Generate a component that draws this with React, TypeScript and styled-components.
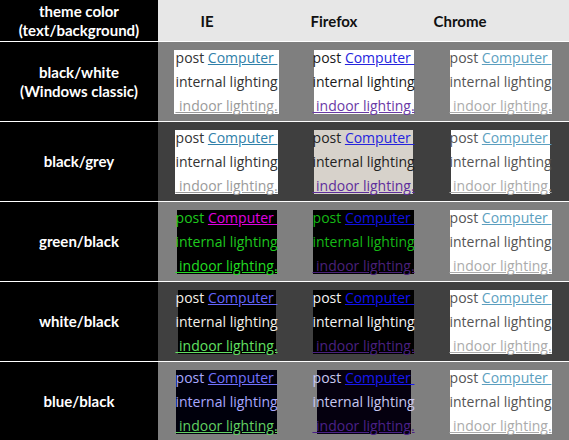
import React from "react";
import styled, { createGlobalStyle } from "styled-components";

const GlobalStyle = createGlobalStyle`
  html, body { margin: 0; padding: 0; background: #000; }
  body { width: 569px; height: 440px; overflow: hidden; }
`;

const Table = styled.div`
  width: 569px;
  display: flex;
  flex-direction: column;
  font-family: Lato, "Open Sans", sans-serif;
`;

const HeaderRow = styled.div`
  display: grid;
  grid-template-columns: 158px 1fr;
  height: 41px;
`;

const LabelCell = styled.div`
  background: #000;
  color: #fff;
  font-weight: 700;
  font-size: 15px;
  line-height: 19px;
  display: flex;
  flex-direction: column;
  align-items: center;
  justify-content: center;
  text-align: center;
`;

const BrowserHeads = styled.div`
  background: #e7e7e7;
  display: grid;
  grid-template-columns: 98px 156px 96px 1fr;
  align-items: center;
`;

const BrowserHead = styled.div`
  text-align: center;
  font-weight: 700;
  font-size: 15px;
  color: #111;
`;

const Row = styled.div`
  display: grid;
  grid-template-columns: 158px 1fr;
  height: 79px;
  border-top: 1px solid #fff;
`;

const Cells = styled.div<{ $bg: string }>`
  background: ${(p) => p.$bg};
  display: grid;
  grid-template-columns: repeat(3, 137px);
  align-items: center;
  justify-items: center;
`;

const Box = styled.div<{ $bg: string; $fg: string; $w: number }>`
  width: ${(p) => p.$w}px;
  height: 64px;
  background: ${(p) => p.$bg};
  color: ${(p) => p.$fg};
  font-family: "Open Sans", sans-serif;
  font-size: 14px;
  line-height: 24px;
  display: flex;
  flex-direction: column;
  justify-content: center;
  align-items: center;
  white-space: nowrap;
`;

const Line = styled.div`
  height: 24px;
`;

const Link = styled.span<{ $c: string }>`
  color: ${(p) => p.$c};
  text-decoration: underline;
  text-decoration-color: ${(p) => p.$c};
`;

type CellStyle = { bg: string; text: string; link: string; visited: string; w: number };

const chrome: CellStyle = { bg: "#fff", text: "#555", link: "#5c9fbf", visited: "#ababab", w: 102 };
const ieWhite: CellStyle = { bg: "#fff", text: "#333", link: "#2f80a9", visited: "#9a9a9a", w: 105 };

const rows: { label: string[]; bg: string; cells: CellStyle[] }[] = [
  {
    label: ["black/white", "(Windows classic)"],
    bg: "#7f7f7f",
    cells: [
      ieWhite,
      { bg: "#fff", text: "#1a1a1a", link: "#2525dd", visited: "#6a3aa6", w: 100 },
      chrome,
    ],
  },
  {
    label: ["black/grey"],
    bg: "#3f3f3f",
    cells: [
      { ...ieWhite, w: 103 },
      { bg: "#d7d2cb", text: "#222", link: "#2424dd", visited: "#5e2e9c", w: 99 },
      { ...chrome, w: 99 },
    ],
  },
  {
    label: ["green/black"],
    bg: "#7f7f7f",
    cells: [
      { bg: "#000", text: "#1ec81e", link: "#e000e0", visited: "#22dd22", w: 100 },
      { bg: "#000", text: "#15b815", link: "#1010e0", visited: "#4a207a", w: 101 },
      chrome,
    ],
  },
  {
    label: ["white/black"],
    bg: "#404040",
    cells: [
      { bg: "#000", text: "#f4f0e8", link: "#6464ff", visited: "#62e062", w: 98 },
      { bg: "#000", text: "#f4f4f4", link: "#1010f0", visited: "#4a2080", w: 101 },
      chrome,
    ],
  },
  {
    label: ["blue/black"],
    bg: "#7f7f7f",
    cells: [
      { bg: "#00000c", text: "#a8a8ff", link: "#7272ff", visited: "#62d062", w: 101 },
      { bg: "#05000f", text: "#c8c8f0", link: "#1818f0", visited: "#4a2088", w: 94 },
      chrome,
    ],
  },
];

const Sample: React.FC<{ s: CellStyle }> = ({ s }) => (
  <Box $bg={s.bg} $fg={s.text} $w={s.w}>
    <Line>
      post <Link $c={s.link}>Computer&nbsp;</Link>
    </Line>
    <Line>internal lighting</Line>
    <Line>
      <Link $c={s.visited}>&nbsp;indoor lighting.</Link>
    </Line>
  </Box>
);

export default function App() {
  return (
    <>
      <GlobalStyle />
      <Table>
        <HeaderRow>
          <LabelCell>
            <span>theme color</span>
            <span>(text/background)</span>
          </LabelCell>
          <BrowserHeads>
            <BrowserHead>IE</BrowserHead>
            <BrowserHead>Firefox</BrowserHead>
            <BrowserHead>Chrome</BrowserHead>
          </BrowserHeads>
        </HeaderRow>
        {rows.map((r, i) => (
          <Row key={i}>
            <LabelCell>
              {r.label.map((l) => (
                <span key={l}>{l}</span>
              ))}
            </LabelCell>
            <Cells $bg={r.bg}>
              {r.cells.map((c, j) => (
                <Sample key={j} s={c} />
              ))}
            </Cells>
          </Row>
        ))}
      </Table>
    </>
  );
}
